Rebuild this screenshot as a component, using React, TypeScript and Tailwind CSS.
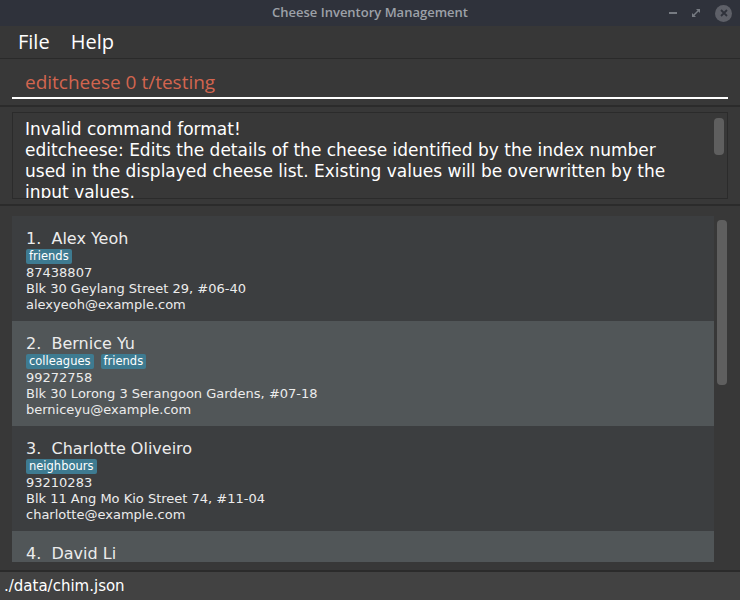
import React from 'react';

type Person = {
  name: string;
  tags: string[];
  phone: string;
  address: string;
  email: string;
};

const people: Person[] = [
  { name: 'Alex Yeoh', tags: ['friends'], phone: '87438807', address: 'Blk 30 Geylang Street 29, #06-40', email: 'alexyeoh@example.com' },
  { name: 'Bernice Yu', tags: ['colleagues', 'friends'], phone: '99272758', address: 'Blk 30 Lorong 3 Serangoon Gardens, #07-18', email: 'berniceyu@example.com' },
  { name: 'Charlotte Oliveiro', tags: ['neighbours'], phone: '93210283', address: 'Blk 11 Ang Mo Kio Street 74, #11-04', email: 'charlotte@example.com' },
];

const dejavu = { fontFamily: '"DejaVu Sans", "Open Sans", sans-serif' };

function PersonCard({ p, i }: { p: Person; i: number }) {
  const odd = i % 2 === 1;
  return (
    <div className={`${odd ? 'bg-[#515658]' : 'bg-[#3c3e40]'} h-[105px] shrink-0 pl-[14px] pt-[13px] text-[#ececec]`}>
      <div className="text-[16px] leading-[20px]">
        {i + 1}.&nbsp; {p.name}
      </div>
      <div className="flex gap-[7px] h-[15px]">
        {p.tags.map((t) => (
          <span key={t} className="bg-[#3e7b91] text-white text-[11.5px] leading-[15px] px-[3px] rounded-[2px]">
            {t}
          </span>
        ))}
      </div>
      <div className="text-[13px] leading-[16px] mt-[1px]">{p.phone}</div>
      <div className="text-[13px] leading-[16px]">{p.address}</div>
      <div className="text-[13px] leading-[16px]">{p.email}</div>
    </div>
  );
}

export default function App() {
  return (
    <div className="w-[740px] h-[600px] flex flex-col bg-[#383838] overflow-hidden" style={{ fontFamily: '"Open Sans", "DejaVu Sans", sans-serif' }}>
      {/* Title bar */}
      <div className="h-[26px] bg-[#2f323b] flex items-center relative shrink-0">
        <div className="flex-1 text-center text-[13px] font-semibold text-[#9da1a8]">Cheese Inventory Management</div>
        <div className="absolute right-[8px] top-0 h-full flex items-center gap-[14px]">
          <div className="w-[8px] h-[2px] bg-[#777b82]" />
          <svg width="10" height="10" viewBox="0 0 10 10">
            <path d="M1 5 L1 9 L5 9 Z M5 1 L9 1 L9 5 Z" fill="#777b82" />
            <path d="M2 8 L8 2" stroke="#777b82" strokeWidth="1.5" />
          </svg>
          <div className="w-[17px] h-[17px] rounded-full bg-[#5e6068] flex items-center justify-center">
            <svg width="8" height="8" viewBox="0 0 8 8">
              <path d="M1 1 L7 7 M7 1 L1 7" stroke="#2f323b" strokeWidth="1.8" />
            </svg>
          </div>
        </div>
      </div>

      {/* Menu bar */}
      <div className="h-[33px] bg-[#373737] flex items-center gap-[21px] pl-[18px] text-[20px] text-white shrink-0 border-b border-[#2a2a2a]">
        <span>File</span>
        <span>Help</span>
      </div>

      {/* Command box */}
      <div className="h-[46px] bg-[#383838] px-[12px] pt-[10px] shrink-0">
        <div className="border-b-2 border-white h-[30px] pl-[13px] text-[19px] leading-[26px] text-[#d2654f]">
          editcheese 0 t/testing
        </div>
      </div>
      <div className="h-[2px] bg-[#2b2b2b] shrink-0" />

      {/* Result display */}
      <div className="h-[97px] px-[12px] pt-[5px] shrink-0" style={dejavu}>
        <div className="h-[87px] border border-[#2b2b2b] bg-[#383838] relative overflow-hidden pl-[12px] pr-[40px] pt-[6px] text-[17px] leading-[21px] text-white">
          <div>Invalid command format!</div>
          <div>editcheese: Edits the details of the cheese identified by the index number used in the displayed cheese list. Existing values will be overwritten by the input values.</div>
          <div className="absolute right-[3px] top-[5px] w-[10px] h-[37px] rounded-[4px] bg-[#5f5f5f]" />
        </div>
      </div>
      <div className="h-[2px] bg-[#2b2b2b] shrink-0" />

      {/* List */}
      <div className="flex-1 flex pl-[12px] pt-[10px] pb-[8px] min-h-0" style={dejavu}>
        <div className="w-[702px] flex flex-col overflow-hidden">
          {people.map((p, i) => (
            <PersonCard key={p.name} p={p} i={i} />
          ))}
          <div className="bg-[#515658] flex-1 pl-[14px] pt-[13px] text-[#ececec] text-[16px] leading-[20px]">
            4.&nbsp; David Li
          </div>
        </div>
        <div className="w-[10px] ml-[3px] mt-[4px] h-[165px] rounded-[4px] bg-[#5f5f5f]" />
      </div>
      <div className="h-[2px] bg-[#2b2b2b] shrink-0" />

      {/* Status bar */}
      <div className="h-[28px] bg-[#424242] flex items-center pl-[4px] text-[15px] text-white shrink-0" style={dejavu}>
        ./data/chim.json
      </div>
    </div>
  );
}
